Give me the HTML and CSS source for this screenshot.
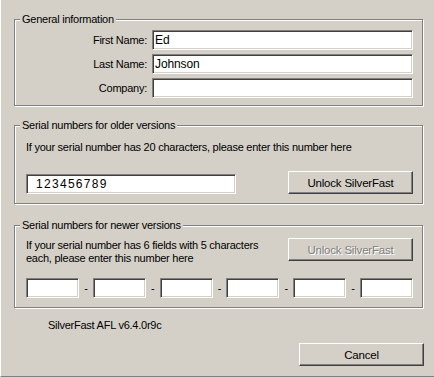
FILE: index.html
```html
<!DOCTYPE html>
<html lang="en">
<head>
    <meta charset="UTF-8">
    <title>SilverFast Registration</title>
    <link rel="stylesheet" href="styles.css">
</head>
<body>
    <div class="window">
        <div class="group general">
            <span class="legend">General information</span>
            <label class="label" for="firstName">First Name:</label>
            <input class="field" type="text" id="firstName" value="Ed">
            <label class="label" for="lastName">Last Name:</label>
            <input class="field" type="text" id="lastName" value="Johnson">
            <label class="label" for="company">Company:</label>
            <input class="field" type="text" id="company" value="">
        </div>

        <div class="group older">
            <span class="legend">Serial numbers for older versions</span>
            <p class="hint">If your serial number has 20 characters, please enter this number here</p>
            <div class="row">
                <input class="field serial" type="text" value="123456789">
                <button class="btn">Unlock SilverFast</button>
            </div>
        </div>

        <div class="group newer">
            <span class="legend">Serial numbers for newer versions</span>
            <div class="row top">
                <p class="hint">If your serial number has 6 fields with 5 characters<br>each, please enter this number here</p>
                <button class="btn" disabled>Unlock SilverFast</button>
            </div>
            <div class="row parts">
                <input class="field part" type="text">
                <span class="dash">-</span>
                <input class="field part" type="text">
                <span class="dash">-</span>
                <input class="field part" type="text">
                <span class="dash">-</span>
                <input class="field part" type="text">
                <span class="dash">-</span>
                <input class="field part" type="text">
                <span class="dash">-</span>
                <input class="field part" type="text">
            </div>
        </div>

        <div class="version">SilverFast AFL v6.4.0r9c</div>
        <button class="btn cancel">Cancel</button>
    </div>
</body>
</html>
```

FILE: styles.css
```css
* {
    box-sizing: border-box;
}
html, body {
    margin: 0;
    background-color: #d4d0c8;
}
body {
    font-family: "Liberation Sans", Arial, sans-serif;
    font-size: 11px;
    line-height: 13px;
    letter-spacing: -0.25px;
    color: #000;
}
.window {
    width: 434px;
    height: 377px;
    border-left: 1px solid #fff;
    border-bottom: 1px solid #808080;
    padding: 19px 10px 0 13px;
    display: flex;
    flex-direction: column;
}
.group {
    position: relative;
    width: 409px;
    border: 1px solid #808080;
    box-shadow: inset 1px 1px 0 #fff, 1px 1px 0 #fff;
}
.legend {
    position: absolute;
    top: -7px;
    left: 5px;
    padding: 0 2px;
    background-color: #d4d0c8;
}
.general {
    display: grid;
    grid-template-columns: 1fr 261px;
    grid-auto-rows: 20px;
    column-gap: 5px;
    row-gap: 4px;
    align-items: center;
    padding: 10px 9px 7px 0;
}
.label {
    text-align: right;
}
.field {
    font-family: inherit;
    font-size: 12px;
    letter-spacing: -0.1px;
    height: 20px;
    margin: 0;
    padding: 0 2px;
    background-color: #fff;
    border: 1px solid;
    border-color: #808080 #fff #fff #808080;
    box-shadow: inset 1px 1px 0 #404040, inset -1px -1px 0 #d4d0c8;
    outline: none;
    color: #000;
}
.hint {
    margin: 0;
}
.older {
    margin-top: 19px;
    padding: 15px 9px 9px 11px;
}
.row {
    display: flex;
    align-items: flex-end;
    justify-content: space-between;
}
.older .row {
    margin-top: 17px;
}
.serial {
    width: 210px;
    padding-left: 9px;
    letter-spacing: 1.3px;
}
.btn {
    font-family: inherit;
    font-size: 11.5px;
    letter-spacing: -0.2px;
    width: 125px;
    height: 23px;
    margin: 0;
    padding: 0;
    background-color: #d4d0c8;
    border: 1px solid;
    border-color: #fff #404040 #404040 #fff;
    box-shadow: inset -1px -1px 0 #808080;
    color: #000;
}
.btn:disabled {
    color: #808080;
    text-shadow: 1px 1px 0 #fff;
}
.newer {
    margin-top: 21px;
    padding: 12px 9px 9px 11px;
}
.newer .top {
    align-items: flex-start;
    height: 27px;
}
.newer .top .hint {
    margin-top: 1px;
}
.parts {
    margin-top: 13px;
    align-items: center;
}
.part {
    width: 53px;
}
.dash {
    width: 6px;
    text-align: center;
}
.version {
    margin-top: 11px;
    padding-left: 34px;
}
.cancel {
    align-self: flex-end;
    margin-top: 11px;
}
```
